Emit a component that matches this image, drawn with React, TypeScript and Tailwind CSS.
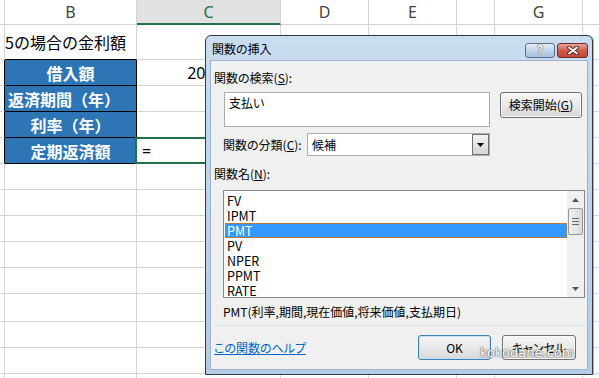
import React from 'react'

const ROWS = [35, 26, 26, 26, 26, 26, 26, 26, 26, 26, 28, 26, 26, 26]
const HEADERS = ['', 'B', 'C', 'D', 'E', '', 'G', '']
const BLUE = ['借入額', '返済期間（年）', '利率（年）', '定期返済額']
const FUNCS = ['FV', 'IPMT', 'PMT', 'PV', 'NPER', 'PPMT', 'RATE']

function Sheet() {
  return (
    <div className="grid grid-cols-[5px_132px_144px_88px_88px_38px_88px_17px] grid-rows-[25px_35px_26px_26px_26px_26px_26px_26px_26px_26px_26px_28px_26px_26px_26px] font-['Noto_Sans_CJK_JP',sans-serif] text-black">
      {/* column headers */}
      {HEADERS.map((h, i) => (
        <div
          key={'h' + i}
          className={
            i === 2
              ? 'flex items-center justify-center border-r border-[#d4d4d4] border-b-2 border-b-[#217346] bg-[#e1e1e1] text-[#217346] text-[16px] font-["Noto_Sans",sans-serif]'
              : 'flex items-center justify-center border-r border-b border-[#d4d4d4] text-[#444] text-[16px] font-["Noto_Sans",sans-serif]'
          }
        >
          {h}
        </div>
      ))}

      {ROWS.map((_, r) =>
        HEADERS.map((__, c) => {
          const blueRow = r >= 1 && r <= 4
          let cls = 'relative flex items-center border-r border-b border-[#d4d4d4]'
          let content: React.ReactNode = null

          if (c === 0 && blueRow) cls = 'relative border-r border-r-black border-b border-b-[#d4d4d4]'
          if (c === 1 && r === 0) {
            cls = 'relative flex items-center border-r border-[#d4d4d4] border-b border-b-black'
            content = <span className="text-[16px] whitespace-nowrap leading-none">5の場合の金利額</span>
          }
          if (c === 1 && blueRow) {
            const label = BLUE[r - 1]
            cls =
              'relative flex items-center border-r border-b border-black bg-[#2e75b6] text-white font-bold text-[16px] ' +
              (r === 2 ? 'justify-start pl-[3px]' : 'justify-center')
            content = <span className="whitespace-nowrap leading-none">{label}</span>
          }
          if (c === 2 && r === 1) {
            cls += ' justify-end pr-[11px]'
            content = <span className="text-[16px] font-['Noto_Sans',sans-serif]">20,000,000</span>
          }
          if (c === 2 && r === 4) {
            content = (
              <>
                <span className="pl-[5px] text-[16px] font-['Noto_Sans',sans-serif]">=</span>
                <div className="absolute left-[-2px] top-[-1px] w-[146px] h-[27px] border-2 border-[#217346]" />
              </>
            )
          }
          return (
            <div key={r + '-' + c} className={cls}>
              {content}
            </div>
          )
        })
      )}
    </div>
  )
}

function Btn({ children, focus, className }: { children: React.ReactNode; focus?: boolean; className?: string }) {
  return (
    <div
      className={
        'flex items-center justify-center rounded-[3px] border text-[12px] bg-gradient-to-b from-[#f6f6f6] via-[#e9e9e9] to-[#d6d6d6] ' +
        (focus ? 'border-[#3c7fb1] shadow-[inset_0_0_0_1px_#c3e4f6]' : 'border-[#707070] shadow-[inset_0_0_0_1px_#fbfbfb]') +
        ' ' +
        (className ?? '')
      }
    >
      {children}
    </div>
  )
}

function Dialog() {
  return (
    <div className="absolute left-[205px] top-[35px] w-[388px] h-[340px] flex flex-col rounded-t-[6px] border border-[#2f3a46] bg-gradient-to-b from-[#c9dcf0] to-[#b4cbe4] px-[4px] pb-[4px] font-['Noto_Sans_CJK_JP',sans-serif] [font-feature-settings:'palt'] text-[12px] text-black shadow-[1px_0_0_#5fd3f3]">
      {/* title bar */}
      <div className="h-[24px] flex items-center">
        <span className="pl-[2px] pt-[2px] text-[12px]">関数の挿入</span>
        <div className="ml-auto mt-[4px] flex gap-[2px]">
          <div className="w-[30px] h-[15px] rounded-[3px] border border-[#5b6f8c] bg-gradient-to-b from-[#e3ecf6] via-[#c3d4e8] to-[#a8bfdc] flex items-center justify-center">
            <span className="text-[12px] font-bold leading-none text-white [text-shadow:0_0_1px_#333,0_0_1px_#333] font-['Noto_Sans',sans-serif]">?</span>
          </div>
          <div className="w-[31px] h-[15px] rounded-[3px] border border-[#6e2a2a] bg-gradient-to-b from-[#e8a294] via-[#cf5b4b] to-[#c24836] flex items-center justify-center">
            <svg width="14" height="9" viewBox="0 0 14 9">
              <path d="M3 1.5 L11 7.5 M11 1.5 L3 7.5" stroke="#4a1c1c" strokeWidth="3.6" strokeLinecap="round" />
              <path d="M3 1.5 L11 7.5 M11 1.5 L3 7.5" stroke="#fff" strokeWidth="2" strokeLinecap="round" />
            </svg>
          </div>
        </div>
      </div>

      {/* body */}
      <div className="flex-1 flex flex-col bg-[#f0f0f0] border border-[#9fb4cc] relative">
        <div className="ml-[3px] mt-[8px] h-[18px] leading-[18px]">
          関数の検索(<u>S</u>):
        </div>

        <div className="mt-[5px] flex items-start">
          <div className="ml-[13px] w-[266px] h-[35px] bg-white border border-[#abadb3] pl-[4px] pt-[1px] leading-[18px]">
            支払い
          </div>
          <Btn className="ml-[10px] w-[82px] h-[26px]">
            検索開始(<u>G</u>)
          </Btn>
        </div>

        <div className="mt-[6px] flex items-center">
          <div className="ml-[12px] w-[84px] leading-[18px]">
            関数の分類(<u>C</u>):
          </div>
          <div className="w-[183px] h-[23px] bg-white border border-[#abadb3] flex items-center">
            <span className="pl-[4px] flex-1">候補</span>
            <div className="w-[17px] h-[21px] border border-[#707070] bg-gradient-to-b from-[#f3f3f3] to-[#d5d5d5] flex items-center justify-center">
              <svg width="7" height="4" viewBox="0 0 7 4">
                <path d="M0 0 H7 L3.5 4 Z" fill="#000" />
              </svg>
            </div>
          </div>
        </div>

        <div className="ml-[3px] mt-[9px] h-[18px] leading-[18px]">
          関数名(<u>N</u>):
        </div>

        <div className="ml-[12px] mt-[7px] w-[362px] h-[108px] bg-white border border-[#828790] flex">
          <div className="flex-1 pt-[2px] pl-[1px] flex flex-col">
            {FUNCS.map((f) => (
              <div
                key={f}
                className={
                  'h-[15px] leading-[15px] pl-[2px] text-[12.5px] ' +
                  (f === 'PMT' ? 'bg-[#3399ff] text-white outline-1 outline-dotted outline-[#b7793a] -outline-offset-1' : '')
                }
              >
                {f}
              </div>
            ))}
          </div>
          <div className="w-[17px] bg-[#f0f0f0] flex flex-col items-center">
            <div className="h-[17px] flex items-center justify-center">
              <svg width="7" height="4" viewBox="0 0 7 4">
                <path d="M0 4 H7 L3.5 0 Z" fill="#555" />
              </svg>
            </div>
            <div className="w-[15px] h-[27px] rounded-[2px] border border-[#979797] bg-gradient-to-r from-[#f1f1f1] to-[#dadada] flex flex-col items-center justify-center gap-[2px]">
              <div className="w-[7px] h-px bg-[#666]" />
              <div className="w-[7px] h-px bg-[#666]" />
              <div className="w-[7px] h-px bg-[#666]" />
            </div>
            <div className="mt-auto h-[17px] flex items-center justify-center">
              <svg width="7" height="4" viewBox="0 0 7 4">
                <path d="M0 0 H7 L3.5 4 Z" fill="#555" />
              </svg>
            </div>
          </div>
        </div>

        <div className="ml-[12px] mt-[5px] h-[18px] leading-[18px]">PMT(利率,期間,現在価値,将来価値,支払期日)</div>

        <div className="ml-[3px] mt-[4px] w-[371px] h-px bg-[#d5dfe5]" />

        <div className="mt-[9px] flex items-center">
          <span className="ml-[3px] text-[#0066cc] underline">この関数のヘルプ</span>
          <Btn focus className="ml-auto w-[73px] h-[25px]">
            OK
          </Btn>
          <Btn className="ml-[11px] mr-[11px] w-[74px] h-[25px]">キャンセル</Btn>
        </div>

        <span className="absolute left-[269px] top-[285px] text-[13px] leading-none text-white font-['DejaVu_Sans',sans-serif] [text-shadow:0_0_2px_#555,0_0_1px_#555]">
          kokodane.com
        </span>
      </div>
    </div>
  )
}

export default function App() {
  return (
    <div className="relative w-[600px] h-[378px] overflow-hidden bg-white">
      <Sheet />
      <Dialog />
    </div>
  )
}
